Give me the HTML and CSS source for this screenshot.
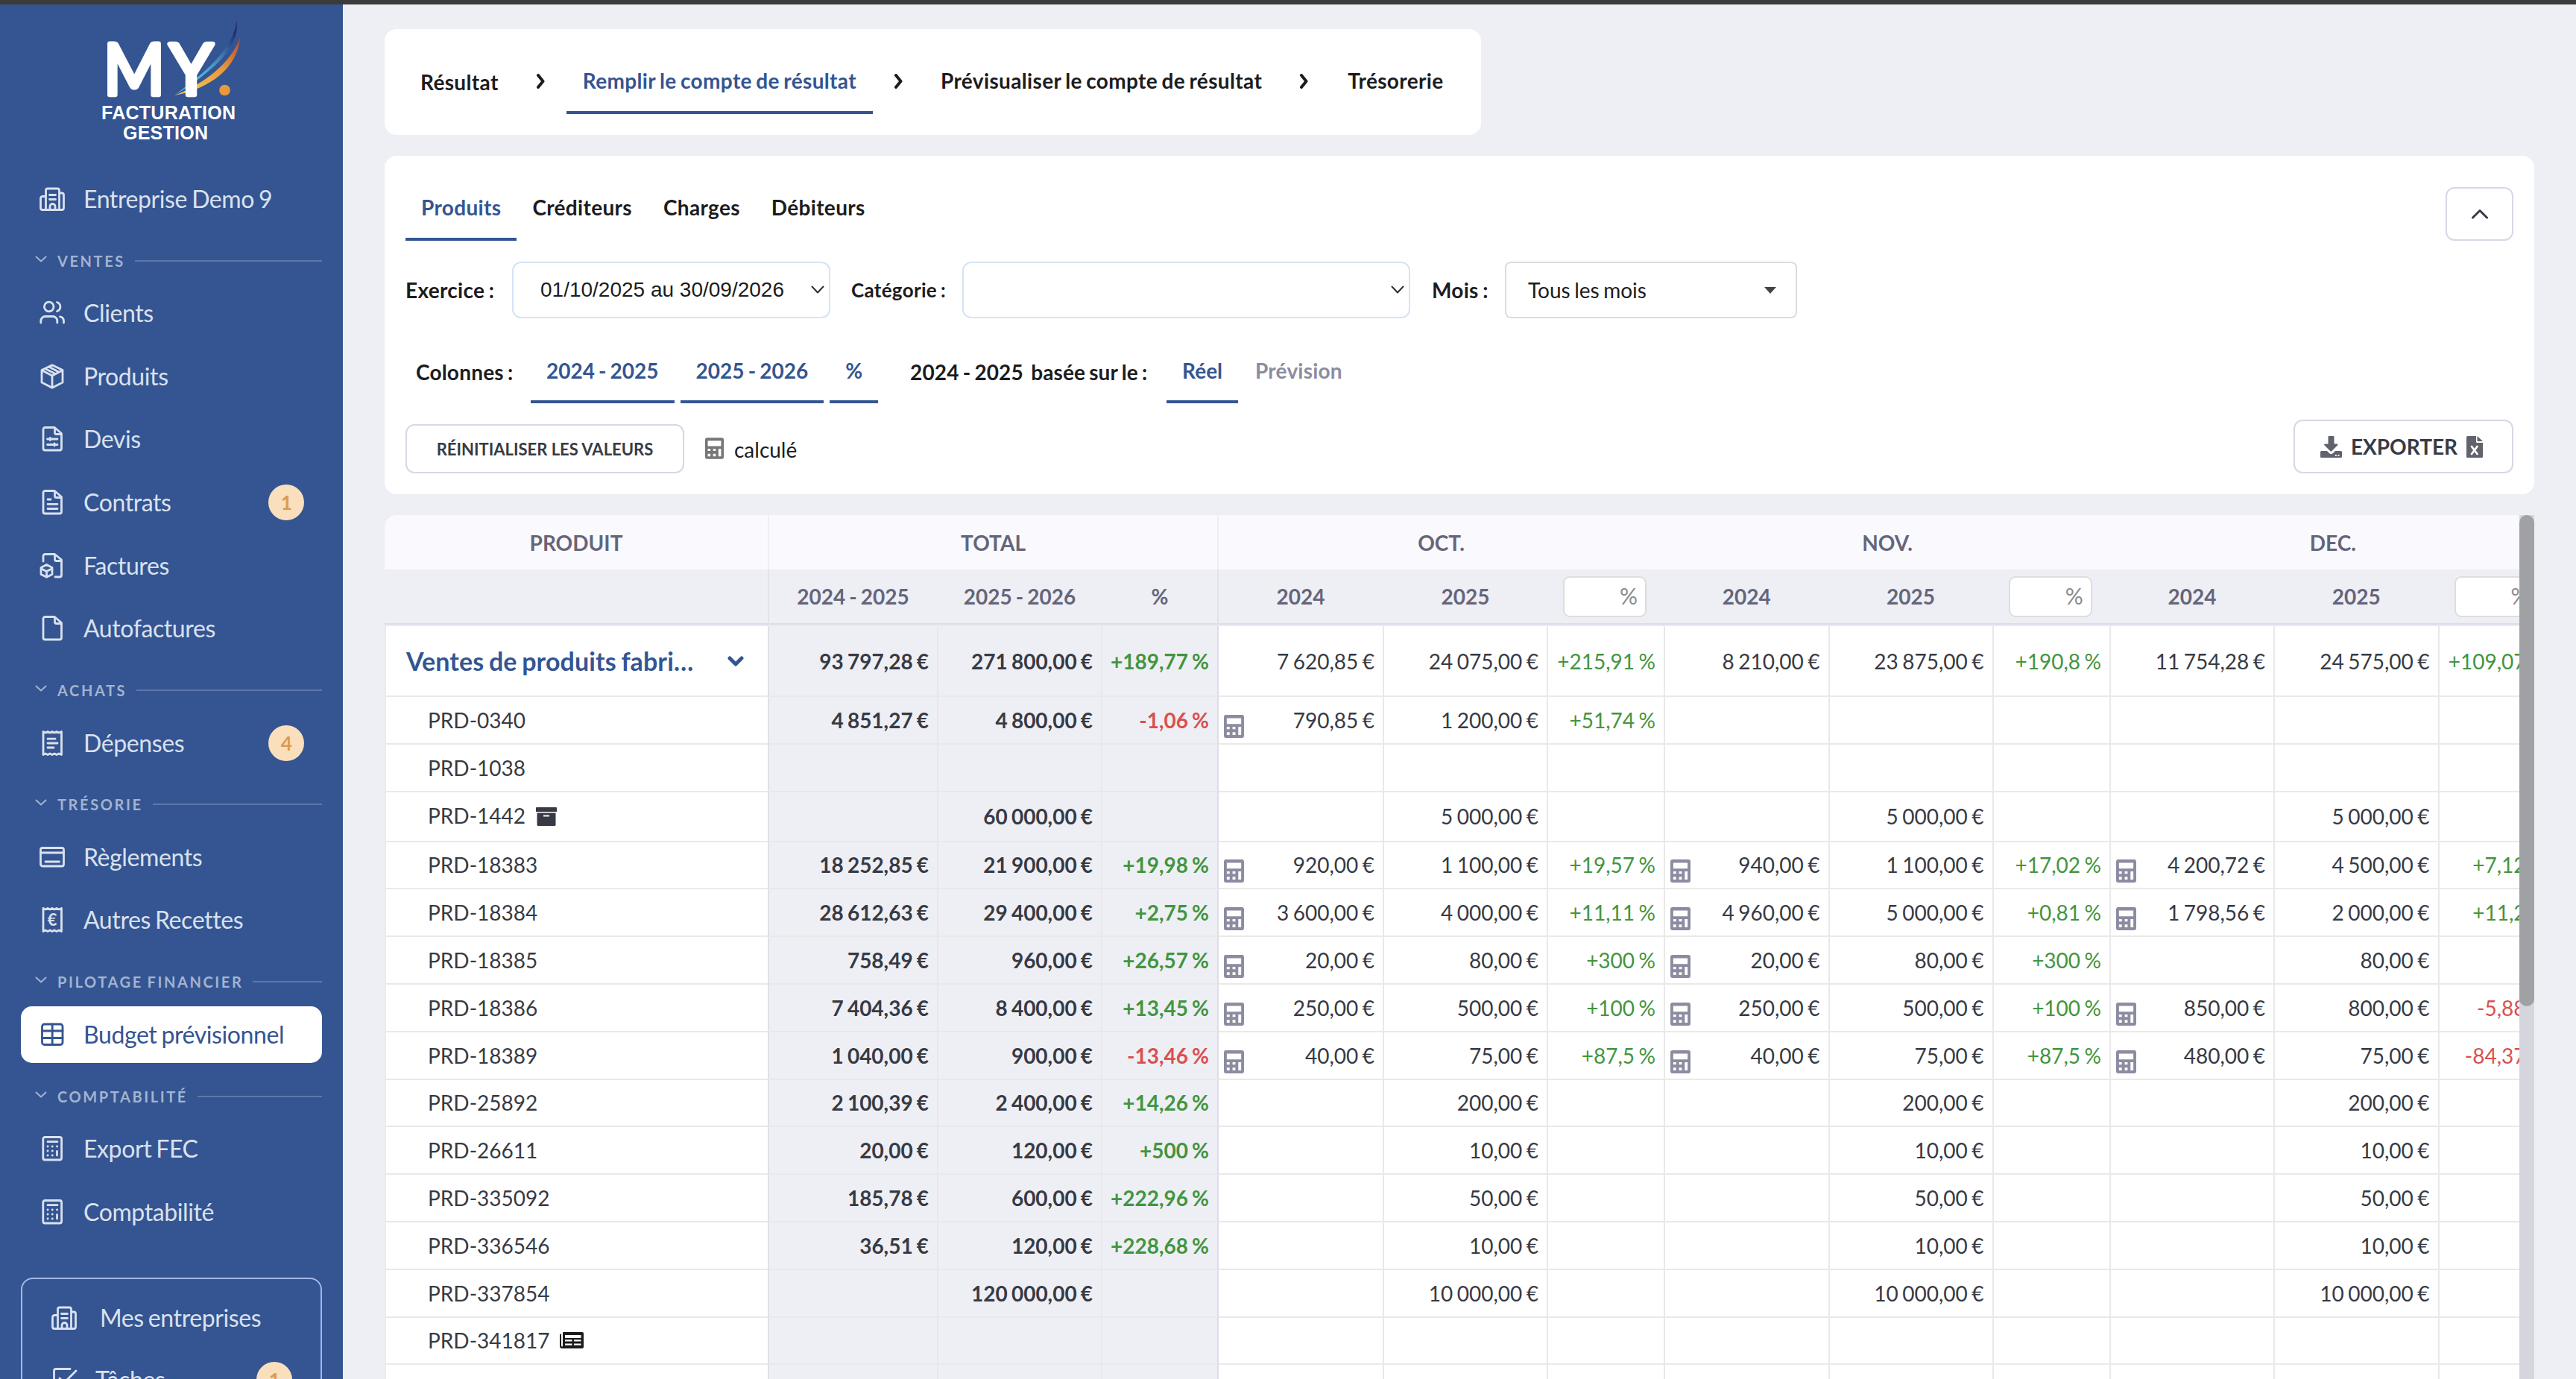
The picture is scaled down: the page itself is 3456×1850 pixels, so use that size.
FILE: index.html
```html
<!DOCTYPE html>
<html lang="fr">
<head>
    <meta charset="UTF-8">
    <title>Budget prévisionnel</title>
    <link rel="stylesheet" href="styles.css">
</head>
<body>

    <!-- Icon sprite -->
    <svg class="sprite">
        <symbol id="i-building" viewBox="0 0 36 36">
            <path d="M9.5 32.5V6.5a2.5 2.5 0 0 1 2.5-2.5h13a2.5 2.5 0 0 1 2.5 2.5v26M9.5 14.5H5A2.5 2.5 0 0 0 2.5 17v13A2.5 2.5 0 0 0 5 32.5h26a2.5 2.5 0 0 0 2.5-2.5V12.5a2.5 2.5 0 0 0-2.5-2.5h-3.5M14.5 12.5h8M14.5 18.5h8M15 32v-4a3.5 3.5 0 0 1 7 0v4"/>
        </symbol>
        <symbol id="i-users" viewBox="0 0 36 36">
            <circle cx="13.7" cy="9.5" r="6.3"/>
            <path d="M2.8 31v-2.5a6 6 0 0 1 6-6h10a6 6 0 0 1 6 6V31M24.5 3.5a6.3 6.3 0 0 1 0 12M28.5 22.8a6 6 0 0 1 5 5.7V31"/>
        </symbol>
        <symbol id="i-box" viewBox="0 0 36 36">
            <path d="M18 2.8L32 9.5V26L18 33.3L4 26V9.5ZM4.5 10L18 17L31.5 10M18 17V33M13.5 5L26.8 12M8.5 7.5L22 14.5"/>
        </symbol>
        <symbol id="i-file" viewBox="0 0 36 36">
            <path d="M21 2.5H8.5A2.5 2.5 0 0 0 6 5v25.5A2.5 2.5 0 0 0 8.5 33h19.5a2.5 2.5 0 0 0 2.5-2.5V10.5L21.5 2.8V9.5a2 2 0 0 0 2 2h7"/>
        </symbol>
        <symbol id="i-sliders" viewBox="0 0 36 36">
            <use href="#i-file"/>
            <path d="M11.5 18h13.5M15.3 16.5v3M11.5 25.5h13.5M21 24v3"/>
        </symbol>
        <symbol id="i-filetext" viewBox="0 0 36 36">
            <use href="#i-file"/>
            <path d="M12 14h4M12 20.3h13M12 26.5h13"/>
        </symbol>
        <symbol id="i-filebox" viewBox="0 0 36 36">
            <path d="M6 12V5a2.5 2.5 0 0 1 2.5-2.5H21.5L30.5 10V30.5A2.5 2.5 0 0 1 28 33H22M21.5 2.8V9.5a2 2 0 0 0 2 2h7M10.5 16.5L18 20.5V29.5L10.5 33.3L3 29.5V20.5ZM4.5 22.5L10.5 25.5L16.5 22.5M10.5 25.5V32"/>
        </symbol>
        <symbol id="i-receipt" viewBox="0 0 36 36">
            <path d="M6 2.5l3 1.5l3-1.5l3 1.5l3-1.5l3 1.5l3-1.5l3 1.5l3.5-1.5v31l-3.5-1.5l-3 1.5l-3-1.5l-3 1.5l-3-1.5l-3 1.5l-3-1.5l-3 1.5z"/>
        </symbol>
        <symbol id="i-expense" viewBox="0 0 36 36">
            <use href="#i-receipt"/>
            <path d="M12 12.2h10M12 18h13M12 24h8"/>
        </symbol>
        <symbol id="i-euro" viewBox="0 0 36 36">
            <use href="#i-receipt"/>
            <text class="euro" x="18" y="25.5" text-anchor="middle">€</text>
        </symbol>
        <symbol id="i-card" viewBox="0 0 36 36">
            <rect x="2.5" y="5.5" width="31" height="24.5" rx="2.5"/>
            <path d="M2.5 12h31M9 24h18.5"/>
        </symbol>
        <symbol id="i-table" viewBox="0 0 36 36">
            <rect x="4.5" y="4" width="27.5" height="27.5" rx="3"/>
            <path d="M18.2 4v27.5M4.5 13h27.5M4.5 22.5h27.5"/>
        </symbol>
        <symbol id="i-calc" viewBox="0 0 36 36">
            <rect x="5.8" y="2.5" width="24.8" height="30.5" rx="2.5"/>
            <path d="M12 8.7h13M12 15h.1M18.2 15h.1M24.5 15h.1M12 21h.1M18.2 21h.1M12 27h.1M18.2 27h.1M24.5 21.5v5.5"/>
        </symbol>
        <symbol id="i-check" viewBox="0 0 36 36">
            <path d="M26 3.5H7A2.5 2.5 0 0 0 4.5 6v24A2.5 2.5 0 0 0 7 32.5h24M12 16l6 6L34 6"/>
        </symbol>
        <symbol id="i-down" viewBox="0 0 16 10">
            <path d="M1.5 1.5L8 7.5L14.5 1.5"/>
        </symbol>
        <symbol id="i-right" viewBox="0 0 14 20">
            <path d="M3 2L9.5 10L3 18"/>
        </symbol>
        <symbol id="i-select" viewBox="0 0 18 12">
            <path d="M1.5 1.5L9 9.5L16.5 1.5"/>
        </symbol>
        <symbol id="i-calculator" viewBox="0 0 28 32">
            <path fill-rule="evenodd" d="M3 0H25a3 3 0 0 1 3 3V29a3 3 0 0 1-3 3H3a3 3 0 0 1-3-3V3A3 3 0 0 1 3 0ZM4 4.5V12.5H24V4.5ZM4 16.5V20H8V16.5ZM12 16.5V20H16V16.5ZM4 24V28H8V24ZM12 24V28H16V24ZM20 16.5V28H24V16.5Z"/>
        </symbol>
        <symbol id="i-archive" viewBox="0 0 28 25">
            <path fill-rule="evenodd" d="M1 0H27a1 1 0 0 1 1 1V6H0V1A1 1 0 0 1 1 0ZM1.5 7.5H26.5V23.5a1.5 1.5 0 0 1-1.5 1.5H3a1.5 1.5 0 0 1-1.5-1.5ZM10 10.5V12.5H18V10.5Z"/>
        </symbol>
        <symbol id="i-news" viewBox="0 0 32 22">
            <path fill-rule="evenodd" d="M5 0H30a2 2 0 0 1 2 2V20a2 2 0 0 1-2 2H3a3 3 0 0 1-3-3V4A2 2 0 0 1 2 2.2V18.5a1 1 0 0 0 2 0V1A1 1 0 0 1 5 0ZM7 4V8H28.5V4ZM7 10.3V12.5H16.5V10.3ZM19 10.3V12.5H28.5V10.3ZM7 15.5V17.7H16.5V15.5ZM19 15.5V17.7H28.5V15.5Z"/>
        </symbol>
    </svg>

    <div class="topbar"></div>

    <div class="layout">
        <aside class="sidebar">
            <svg class="logo" viewBox="0 0 200 140">
                <defs>
                    <linearGradient id="blue" x1="0" y1="1" x2="1" y2="0">
                        <stop offset="0.3" stop-color="#55bfe8"/>
                        <stop offset="0.6" stop-color="#3f86c0"/>
                        <stop offset="0.9" stop-color="#222e70"/>
                    </linearGradient>
                    <linearGradient id="gold" x1="0" y1="1" x2="1" y2="0">
                        <stop offset="0.2" stop-color="#f0c04c"/>
                        <stop offset="0.6" stop-color="#e9983c"/>
                        <stop offset="1" stop-color="#b8472c"/>
                    </linearGradient>
                </defs>
                <path fill="url(#gold)" d="M104 105C148 88 182 58 192 27C190 62 160 94 104 105Z"/>
                <path fill="url(#blue)" d="M104 105C134 82 182 48 187.5 5C192 40 158 71 104 105Z"/>
                <text class="logo-my" x="9" y="104" textLength="82" lengthAdjust="spacingAndGlyphs">M</text>
                <text class="logo-my" x="97.5" y="104" textLength="58" lengthAdjust="spacingAndGlyphs">Y</text>
                <circle cx="171.5" cy="98" r="7.3" fill="#e9983c"/>
                <text class="logo-sub" x="6" y="137" textLength="180">FACTURATION</text>
                <text class="logo-sub" x="35" y="164" textLength="114">GESTION</text>
            </svg>

            <a class="item company"><svg class="icon"><use href="#i-building"/></svg>Entreprise Demo 9</a>

            <div class="section"><svg class="chev"><use href="#i-down"/></svg>VENTES</div>
            <a class="item"><svg class="icon"><use href="#i-users"/></svg>Clients</a>
            <a class="item"><svg class="icon"><use href="#i-box"/></svg>Produits</a>
            <a class="item"><svg class="icon"><use href="#i-sliders"/></svg>Devis</a>
            <a class="item"><svg class="icon"><use href="#i-filetext"/></svg>Contrats<span class="badge">1</span></a>
            <a class="item"><svg class="icon"><use href="#i-filebox"/></svg>Factures</a>
            <a class="item"><svg class="icon"><use href="#i-file"/></svg>Autofactures</a>

            <div class="section"><svg class="chev"><use href="#i-down"/></svg>ACHATS</div>
            <a class="item"><svg class="icon"><use href="#i-expense"/></svg>Dépenses<span class="badge">4</span></a>

            <div class="section"><svg class="chev"><use href="#i-down"/></svg>TRÉSORIE</div>
            <a class="item"><svg class="icon"><use href="#i-card"/></svg>Règlements</a>
            <a class="item"><svg class="icon"><use href="#i-euro"/></svg>Autres Recettes</a>

            <div class="section"><svg class="chev"><use href="#i-down"/></svg>PILOTAGE FINANCIER</div>
            <a class="item active"><svg class="icon"><use href="#i-table"/></svg>Budget prévisionnel</a>

            <div class="section"><svg class="chev"><use href="#i-down"/></svg>COMPTABILITÉ</div>
            <a class="item"><svg class="icon"><use href="#i-calc"/></svg>Export FEC</a>
            <a class="item"><svg class="icon"><use href="#i-calc"/></svg>Comptabilité</a>

            <div class="bottom-box">
                <a class="item wide"><svg class="icon"><use href="#i-building"/></svg>Mes entreprises</a>
                <a class="item"><svg class="icon"><use href="#i-check"/></svg>Tâches<span class="badge">1</span></a>
            </div>
        </aside>

        <main class="main">
            <nav class="card steps">
                <a class="tab first">Résultat</a>
                <svg class="sep"><use href="#i-right"/></svg>
                <a class="tab on">Remplir le compte de résultat</a>
                <svg class="sep"><use href="#i-right"/></svg>
                <a class="tab">Prévisualiser le compte de résultat</a>
                <svg class="sep"><use href="#i-right"/></svg>
                <a class="tab last">Trésorerie</a>
            </nav>

            <section class="card filters">
                <div class="row row-tabs">
                    <a class="tab on">Produits</a>
                    <a class="tab">Créditeurs</a>
                    <a class="tab">Charges</a>
                    <a class="tab">Débiteurs</a>
                    <button class="btn collapse"><svg class="up" viewBox="0 0 24 14"><path d="M2.5 12L12 2.5L21.5 12"/></svg></button>
                </div>

                <div class="row row-selects">
                    <label class="lbl-exercice">Exercice :</label>
                    <div class="select exercice"><span>01/10/2025 au 30/09/2026</span><svg class="arrow"><use href="#i-select"/></svg></div>
                    <label class="lbl-categorie">Catégorie :</label>
                    <div class="select categorie"><span></span><svg class="arrow"><use href="#i-select"/></svg></div>
                    <label class="lbl-mois">Mois :</label>
                    <div class="select mois"><span>Tous les mois</span><i class="caret"></i></div>
                </div>

                <div class="row row-columns">
                    <label class="lbl-colonnes">Colonnes :</label>
                    <a class="tab on">2024 - 2025</a>
                    <a class="tab on">2025 - 2026</a>
                    <a class="tab on">%</a>
                    <label class="lbl-base">2024 - 2025 &nbsp;basée sur le :</label>
                    <a class="tab on">Réel</a>
                    <a class="tab off">Prévision</a>
                </div>

                <div class="row row-actions">
                    <button class="btn reset">RÉINITIALISER LES VALEURS</button>
                    <span class="legend"><svg class="calculator"><use href="#i-calculator"/></svg>calculé</span>
                    <button class="btn export">
                        <svg class="download" viewBox="0 0 29 29"><path fill-rule="evenodd" d="M11.5 0h6a1 1 0 0 1 1 1V10.5h4a1 1 0 0 1 .7 1.7l-8 8a1.3 1.3 0 0 1-1.8 0l-8-8a1 1 0 0 1 .7-1.7h4.4V1a1 1 0 0 1 1-1ZM1.5 20H9l3 3a3.5 3.5 0 0 0 5 0l3-3H27.5a1.5 1.5 0 0 1 1.5 1.5v6a1.5 1.5 0 0 1-1.5 1.5h-26A1.5 1.5 0 0 1 0 27.5v-6A1.5 1.5 0 0 1 1.5 20ZM19.8 25v2h2v-2ZM23.5 25v2h2v-2Z"/></svg>
                        EXPORTER
                        <svg class="excel" viewBox="0 0 22 29"><path d="M1.5 0H13V7.5A1.5 1.5 0 0 0 14.5 9H22V27.5a1.5 1.5 0 0 1-1.5 1.5h-19A1.5 1.5 0 0 1 0 27.5v-26A1.5 1.5 0 0 1 1.5 0ZM14.5 0L22 7H14.5Z"/><path class="cross" d="M7 14L14.5 24M14.5 14L7 24"/></svg>
                    </button>
                </div>
            </section>

            <section class="budget">
                <div class="grid-wrap">
                    <div class="line head1">
                        <div class="edge">PRODUIT</div>
                        <div class="span3 edge">TOTAL</div>
                        <div class="span3">OCT.</div>
                        <div class="span3">NOV.</div>
                        <div class="span3">DEC.</div>
                    </div>
                    <div class="line head2">
                        <div class="edge"></div>
                        <div>2024 - 2025</div><div>2025 - 2026</div><div class="edge">%</div>
                        <div>2024</div><div>2025</div><div class="rate"><span class="pct">%</span></div>
                        <div>2024</div><div>2025</div><div class="rate"><span class="pct">%</span></div>
                        <div>2024</div><div>2025</div><div class="rate"><span class="pct">%</span></div>
                    </div>
                    <div id="rows"></div>
                </div>
                <div class="scrollbar"><div class="thumb"></div></div>
            </section>
        </main>
    </div>

    <script src="script.js"></script>
</body>
</html>
```
FILE: script.js
```js
// name | total N-1, total N, % | oct | nov | dec   ("=" marks a calculated value)
const rows = [
    ["Ventes de produits fabri…", "93 797,28 €", "271 800,00 €", "+189,77 %", "7 620,85 €", "24 075,00 €", "+215,91 %", "8 210,00 €", "23 875,00 €", "+190,8 %", "11 754,28 €", "24 575,00 €", "+109,07 %"],
    ["PRD-0340", "4 851,27 €", "4 800,00 €", "-1,06 %", "=790,85 €", "1 200,00 €", "+51,74 %", "", "", "", "", "", ""],
    ["PRD-1038", "", "", "", "", "", "", "", "", "", "", "", ""],
    ["PRD-1442", "", "60 000,00 €", "", "", "5 000,00 €", "", "", "5 000,00 €", "", "", "5 000,00 €", ""],
    ["PRD-18383", "18 252,85 €", "21 900,00 €", "+19,98 %", "=920,00 €", "1 100,00 €", "+19,57 %", "=940,00 €", "1 100,00 €", "+17,02 %", "=4 200,72 €", "4 500,00 €", "+7,12 %"],
    ["PRD-18384", "28 612,63 €", "29 400,00 €", "+2,75 %", "=3 600,00 €", "4 000,00 €", "+11,11 %", "=4 960,00 €", "5 000,00 €", "+0,81 %", "=1 798,56 €", "2 000,00 €", "+11,2 %"],
    ["PRD-18385", "758,49 €", "960,00 €", "+26,57 %", "=20,00 €", "80,00 €", "+300 %", "=20,00 €", "80,00 €", "+300 %", "", "80,00 €", ""],
    ["PRD-18386", "7 404,36 €", "8 400,00 €", "+13,45 %", "=250,00 €", "500,00 €", "+100 %", "=250,00 €", "500,00 €", "+100 %", "=850,00 €", "800,00 €", "-5,88 %"],
    ["PRD-18389", "1 040,00 €", "900,00 €", "-13,46 %", "=40,00 €", "75,00 €", "+87,5 %", "=40,00 €", "75,00 €", "+87,5 %", "=480,00 €", "75,00 €", "-84,37 %"],
    ["PRD-25892", "2 100,39 €", "2 400,00 €", "+14,26 %", "", "200,00 €", "", "", "200,00 €", "", "", "200,00 €", ""],
    ["PRD-26611", "20,00 €", "120,00 €", "+500 %", "", "10,00 €", "", "", "10,00 €", "", "", "10,00 €", ""],
    ["PRD-335092", "185,78 €", "600,00 €", "+222,96 %", "", "50,00 €", "", "", "50,00 €", "", "", "50,00 €", ""],
    ["PRD-336546", "36,51 €", "120,00 €", "+228,68 %", "", "10,00 €", "", "", "10,00 €", "", "", "10,00 €", ""],
    ["PRD-337854", "", "120 000,00 €", "", "", "10 000,00 €", "", "", "10 000,00 €", "", "", "10 000,00 €", ""],
    ["PRD-341817", "", "", "", "", "", "", "", "", "", "", "", ""],
    ["", "", "", "", "", "", "", "", "", "", "", "", ""]
];

const icons = { "PRD-1442": "archive", "PRD-341817": "news" };

function svg(name) {
    return `<svg class="${name}"><use href="#i-${name}"/></svg>`;
}

function cell(text, i) {
    let cls = i <= 3 ? "cell total" : "cell";
    if (i === 3) cls += " edge";
    if (text[0] === "+") cls += " up-pct";
    if (text[0] === "-") cls += " down-pct";
    if (text[0] === "=") return `<div class="${cls}">${svg("calculator")}${text.slice(1)}</div>`;
    return `<div class="${cls}">${text}</div>`;
}

document.getElementById("rows").innerHTML = rows.map((row, n) => {
    const [name, ...values] = row;
    let cls = "line";
    let extra = icons[name] ? svg(icons[name]) : "";
    if (n === 0) {
        cls += " group";
        extra = `<svg class="toggle" viewBox="0 0 22 14"><path d="M3 3L11 11L19 3"/></svg>`;
    }
    if (name === "PRD-1442") cls += " tall";
    return `<div class="${cls}"><div class="name">${name}${extra}</div>${values.map((v, i) => cell(v, i + 1)).join("")}</div>`;
}).join("");
```
FILE: styles.css
```css
* {
    box-sizing: border-box;
}

body {
    margin: 0;
    height: 1850px;
    overflow: hidden;
    font-family: Lato, sans-serif;
    font-size: 28px;
    line-height: 34px;
    word-spacing: -1.7px;
    color: #1c1c1e;
    background-color: #eeeff5;
}

svg {
    flex: none;
    fill: none;
    stroke-linecap: round;
    stroke-linejoin: round;
}

.sprite {
    display: none;
}

.topbar {
    height: 6px;
    background: #3b3b3b;
}

.layout {
    display: flex;
    height: 1844px;
}

/* Sidebar */
.sidebar {
    width: 460px;
    flex: none;
    padding: 17px 28px 0;
    background: #345592;
    overflow: hidden;
    color: #dae1ee;
    font-size: 32px;
    letter-spacing: -0.4px;
}

.logo {
    display: block;
    width: 200px;
    height: 140px;
    margin-left: 102px;
    overflow: visible;
    letter-spacing: 0;
}

.logo-my {
    font-family: Lato, sans-serif;
    font-weight: 400;
    font-size: 95px;
    fill: #fff;
    stroke: #fff;
    stroke-width: 6.5px;
}

.logo-sub {
    font-family: "Liberation Sans", Arial, sans-serif;
    font-weight: 700;
    font-size: 25px;
    fill: #fff;
}

.item {
    display: flex;
    align-items: center;
    height: 76px;
    margin-bottom: 8.6px;
    padding: 0 24px;
    border-radius: 15px;
}

.company {
    margin-top: 66px;
}

.icon {
    width: 36px;
    height: 36px;
    margin-right: 24px;
    stroke: currentColor;
    stroke-width: 2.8px;
}

.euro {
    font-size: 22px;
    font-weight: 700;
    fill: currentColor;
    stroke: none;
}

.badge {
    width: 48px;
    height: 48px;
    margin-left: auto;
    border-radius: 50%;
    background: #f9dfbb;
    color: #dd9a50;
    font-size: 26px;
    font-weight: 700;
    line-height: 48px;
    text-align: center;
}

.active {
    background: #fff;
    color: #345592;
}

.section {
    display: flex;
    align-items: center;
    height: 68.7px;
    padding: 4px 0 0 19px;
    color: #a3b3d0;
    font-size: 20px;
    font-weight: 700;
    letter-spacing: 2.6px;
}

.section::after {
    content: "";
    flex: 1;
    height: 2px;
    margin-left: 13px;
    background: #5d78a9;
}

.chev {
    width: 16px;
    height: 10px;
    margin: -4px 14px 0 0;
    stroke: currentColor;
    stroke-width: 2px;
}

.bottom-box {
    height: 300px;
    margin-top: 50px;
    padding: 14px 14px 0;
    border: 2px solid #a3b9e8;
    border-radius: 16px;
}

.bottom-box .item {
    margin-bottom: 7px;
}

.bottom-box .wide .icon {
    margin-right: 30px;
}

/* Main */
.main {
    flex: 1;
    padding: 33px 56px 0;
}

.card {
    background: #fff;
    border-radius: 16px;
}

.tab {
    padding: 0 22px;
    border-bottom: 4px solid transparent;
    font-weight: 700;
    white-space: nowrap;
}

.tab.on {
    color: #345592;
    border-bottom-color: #345592;
}

.tab.off {
    color: #8c8ca1;
}

.steps {
    display: flex;
    width: 1471px;
    height: 142px;
    padding: 52px 0 0 26px;
    letter-spacing: 0.35px;
}

.steps .tab {
    height: 62px;
    line-height: 34px;
}

.steps .first {
    padding-top: 2px;
}

.steps .last {
    padding-left: 24px;
}

.sep {
    width: 14px;
    height: 20px;
    margin: 8px 27px 0 28px;
    stroke: #1c1c1e;
    stroke-width: 4px;
}

.filters {
    height: 454px;
    margin-top: 28px;
    padding: 0 28px;
}

.row {
    display: flex;
}

.row label {
    font-weight: 700;
    white-space: nowrap;
}

.row-tabs {
    height: 142px;
    padding-top: 42px;
    letter-spacing: 0.33px;
}

.row-tabs .tab {
    height: 72px;
    padding: 10px 21px 0;
}

.btn {
    display: flex;
    align-items: center;
    justify-content: center;
    padding: 0;
    border: 2px solid #d8d7e6;
    border-radius: 12px;
    background: #fff;
    color: #373b45;
    font-family: inherit;
    font-weight: 700;
}

.collapse {
    width: 91px;
    height: 72px;
    margin-left: auto;
}

.up {
    width: 24px;
    height: 14px;
    stroke: #373b45;
    stroke-width: 3px;
}

.row-selects {
    align-items: center;
    height: 76px;
}

.row-selects label {
    letter-spacing: 0.3px;
}

.select {
    display: flex;
    align-items: center;
    justify-content: space-between;
    height: 76px;
    border: 2px solid #d4e4f5;
    border-radius: 12px;
}

.lbl-exercice {
    width: 143px;
}

.exercice {
    width: 427px;
    padding: 0 6px 0 36px;
    font-family: "Liberation Sans", Arial, sans-serif;
    word-spacing: 0;
}

.lbl-categorie {
    width: 177px;
    padding-left: 28px;
    font-size: 26px;
}

.categorie {
    width: 601px;
    padding-right: 6px;
}

.lbl-mois {
    width: 127px;
    padding-left: 29px;
}

.mois {
    width: 392px;
    padding: 0 26px 0 29px;
    border-color: #dcdcde;
    border-radius: 8px;
}

.arrow {
    width: 18px;
    height: 12px;
    stroke: #2d2d2d;
    stroke-width: 2px;
}

.caret {
    border: 8px solid transparent;
    border-top: 9px solid #444;
    border-bottom: 0;
}

.row-columns {
    height: 136px;
    padding: 53px 0 0 14px;
}

.row-columns .tab {
    height: 61px;
    margin-right: 8px;
    padding: 0 21px;
}

.row-columns label {
    padding-top: 2px;
}

.lbl-colonnes {
    width: 154px;
    letter-spacing: 0.2px;
}

.row-columns .lbl-base {
    width: 379px;
    padding-left: 35px;
    letter-spacing: 0.1px;
}

.row-columns .tab.off {
    margin-left: -8px;
    padding-left: 23px;
    letter-spacing: 0.2px;
}

.row-actions {
    height: 72px;
    align-items: center;
}

.reset {
    width: 374px;
    height: 66px;
    margin-top: 6px;
    font-size: 22px;
}

.legend {
    display: flex;
    align-items: center;
    margin: 7px 0 0 28px;
}

.calculator {
    width: 27px;
    height: 31px;
    fill: #8c8ca1;
}

.legend .calculator {
    width: 25px;
    height: 29px;
    margin: -2px 14px 0 0;
    fill: #777;
}

.export {
    width: 295px;
    height: 72px;
    margin-left: auto;
    padding-right: 5px;
    font-size: 28px;
    gap: 12px;
}

.download {
    width: 29px;
    height: 29px;
    fill: #61636c;
}

.excel {
    width: 22px;
    height: 29px;
    fill: #61636c;
}

.cross {
    stroke: #fff;
    stroke-width: 2.8px;
}

/* Budget grid */
.budget {
    display: flex;
    height: 1200px;
    margin-top: 28px;
}

.grid-wrap {
    width: 2864px;
    overflow: hidden;
    border-top-left-radius: 16px;
}

.line {
    display: grid;
    grid-template-columns: 516px 227px 220px 156px 222px 220px 157px 220.5px 220px 157.5px 220px 220.5px 157px;
    width: 2914px;
    height: 63.8px;
    color: #373a44;
}

.head1,
.head2 {
    color: #65657a;
    font-weight: 700;
}

.head1 {
    height: 73px;
    background: #f9f9fe;
}

.head2 {
    height: 76px;
    border-bottom: 2px solid #ebebec;
    box-shadow: inset 0 -2px #dddceb;
}

.head1 div,
.head2 div {
    display: flex;
    align-items: center;
    justify-content: center;
    padding-right: 2px;
}

.head2 div {
    padding-bottom: 2px;
}

.head1 .edge {
    padding-right: 0;
    border-right: 2px solid #eeeef4;
}

.head2 .edge {
    padding-right: 0;
    border-right: 2px solid #e2e2ec;
}

.head2 .rate {
    padding-right: 5px;
}

.span3 {
    grid-column: span 3;
}

.pct {
    width: 112px;
    height: 55px;
    padding-right: 10px;
    border: 2px solid #ddd;
    border-radius: 9px;
    background: #fff;
    color: #8b8b8b;
    font-size: 30px;
    font-weight: 400;
    line-height: 49px;
    text-align: right;
}

.name,
.cell {
    display: flex;
    align-items: center;
    border-right: 2px solid #e9e9e9;
    border-bottom: 2px solid #e9e9e9;
    background: #fff;
}

.name {
    padding-left: 56px;
    border-left: 2px solid #ebebee;
    border-right: 2px solid #dfdfe8;
}

.cell {
    justify-content: flex-end;
    padding-right: 11px;
    white-space: nowrap;
}

.cell.total {
    background: #eeeff5;
    border-color: #e8e8ec;
    font-weight: 700;
}

.cell.edge {
    border-right-color: #dddde8;
}

.cell .calculator {
    align-self: flex-end;
    margin: 0 auto 7px 7px;
}

.cell.up-pct {
    color: #429540;
}

.cell.down-pct {
    color: #d9504e;
}

.group {
    height: 95px;
}

.tall {
    height: 67px;
}

.tall .name {
    padding-bottom: 3px;
}

.group .name {
    padding: 0 32px 0 27px;
    justify-content: space-between;
    color: #345592;
    font-size: 34px;
    font-weight: 700;
    letter-spacing: 0.1px;
}

.toggle {
    width: 22px;
    height: 14px;
    stroke: #345592;
    stroke-width: 5px;
}

.archive {
    width: 28px;
    height: 25px;
    margin: 4px 0 0 14px;
    fill: #373a44;
}

.news {
    width: 32px;
    height: 22px;
    margin-left: 13px;
    fill: #1c1c1e;
}

.scrollbar {
    width: 20px;
    background: #d5d6dd;
}

.thumb {
    height: 659px;
    border-radius: 10px;
    background: #a0a1a5;
}
```
